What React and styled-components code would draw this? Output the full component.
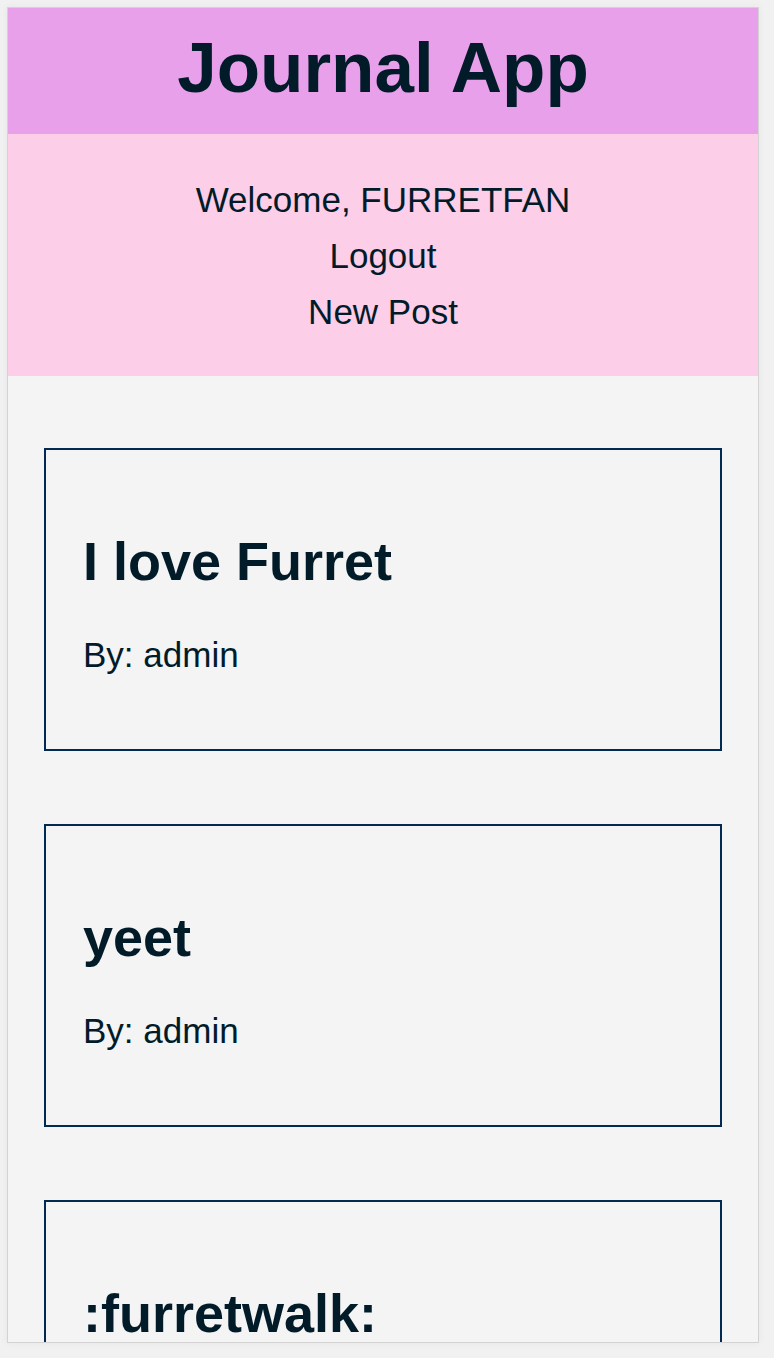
import React from 'react';
import styled, { createGlobalStyle } from 'styled-components';

const posts = [
  { title: 'I love Furret', author: 'admin' },
  { title: 'yeet', author: 'admin' },
  { title: ':furretwalk:', author: 'admin' },
];

const navLinks = ['Logout', 'New Post'];

const GlobalStyle = createGlobalStyle`
  html, body {
    margin: 0;
    padding: 0;
    background: #f1f1f1;
  }
  * {
    box-sizing: border-box;
  }
`;

const App = () => {
  const postList = posts.map((item, index) => {
    return <Card key={index}>
      <CardTitle>{item.title}</CardTitle>
      <CardAuthor>By: {item.author}</CardAuthor>
    </Card>
  });

  return (
    <>
      <GlobalStyle />
      <Frame>
        <Header>
          <Title>Journal App</Title>
        </Header>
        <Nav>
          <NavItem>Welcome, FURRETFAN</NavItem>
          {navLinks.map((item, index) => <NavItem as="a" href="#" key={index}>{item}</NavItem>)}
        </Nav>
        <Feed>{postList}</Feed>
      </Frame>
    </>
  )
}

const Frame = styled.div`
  margin: 7px;
  width: 752px;
  height: 1336px;
  border: 1px solid #d3d3d3;
  box-shadow: 0 0 8px rgba(0, 0, 0, 0.05);
  background: #f4f4f4;
  overflow: hidden;
  font-family: "Liberation Sans", Arial, sans-serif;
  color: #021b29;
`

const Header = styled.header`
  background: #e9a0ea;
  height: 126px;
  padding-top: 18px;
  text-align: center;
`

const Title = styled.h1`
  margin: 0;
  font-size: 71px;
  line-height: 83px;
  font-weight: 700;
`

const Nav = styled.nav`
  display: flex;
  flex-direction: column;
  align-items: center;
  background: #fccee8;
  padding: 38px 0 36px;
`

const NavItem = styled.div`
  font-size: 35px;
  line-height: 56px;
  color: #021b29;
  text-decoration: none;
`

const Feed = styled.main`
  display: flex;
  flex-direction: column;
  gap: 73px;
  padding: 72px 36px;
`

const Card = styled.article`
  border: 2px solid #002a52;
  padding: 80px 37px 74px;
  display: flex;
  flex-direction: column;
  gap: 43px;
`

const CardTitle = styled.h2`
  margin: 0;
  font-size: 54px;
  line-height: 62px;
  font-weight: 700;
`

const CardAuthor = styled.p`
  margin: 0;
  font-size: 35px;
  line-height: 40px;
`

export default App;
